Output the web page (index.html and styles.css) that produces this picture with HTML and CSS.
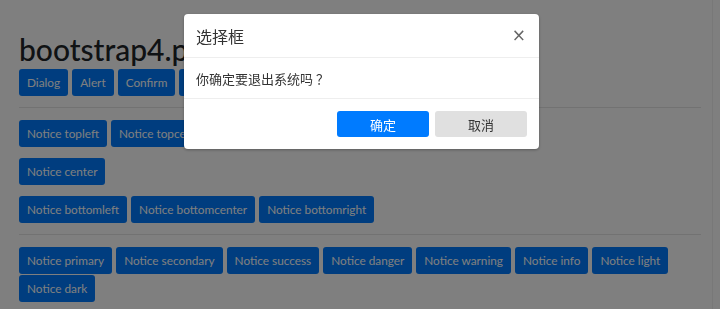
FILE: index.html
```html
<!DOCTYPE html>
<html lang="zh">

<head>
    <meta charset="UTF-8" />
    <meta name="viewport" content="width=device-width, initial-scale=1.0" />
    <title>bootstrap4.pop</title>
    <link rel="stylesheet" href="styles.css">
</head>

<body>

    <!-- Page -->
    <div class="page">
        <h1 class="title">bootstrap4.pop</h1>
        <div class="btn-row">
            <button class="btn">Dialog</button>
            <button class="btn">Alert</button>
            <button class="btn">Confirm</button>
            <button class="btn">Prompt</button>
        </div>

        <hr>

        <div class="btn-row">
            <button class="btn">Notice topleft</button>
            <button class="btn">Notice topcenter</button>
            <button class="btn">Notice topright</button>
        </div>
        <div class="btn-row">
            <button class="btn">Notice center</button>
        </div>
        <div class="btn-row">
            <button class="btn">Notice bottomleft</button>
            <button class="btn">Notice bottomcenter</button>
            <button class="btn">Notice bottomright</button>
        </div>

        <hr>

        <div class="btn-row tight">
            <button class="btn">Notice primary</button>
            <button class="btn">Notice secondary</button>
            <button class="btn">Notice success</button>
            <button class="btn">Notice danger</button>
            <button class="btn">Notice warning</button>
            <button class="btn">Notice info</button>
            <button class="btn">Notice light</button>
            <button class="btn">Notice dark</button>
        </div>
    </div>

    <!-- Confirm modal -->
    <div class="backdrop"></div>
    <div class="modal">
        <div class="modal-header">
            <h5>选择框</h5>
            <button class="close">×</button>
        </div>
        <div class="modal-body">你确定要退出系统吗 ？</div>
        <div class="modal-footer">
            <button class="m-btn ok">确定</button>
            <button class="m-btn cancel">取消</button>
        </div>
    </div>

</body>

</html>
```

FILE: styles.css
```css
* {
    box-sizing: border-box;
    margin: 0;
    padding: 0;
}

body {
    background-color: #fff;
    color: #212529;
    font-family: Lato, 'Noto Sans CJK SC', sans-serif;
}

.page {
    width: 713px;
    height: 309px;
    padding: 0 11px 0 19px;
    border-right: 1px solid #f0f0f0;
}

.title {
    font-size: 30px;
    font-weight: 500;
    line-height: 34px;
    padding-top: 32px;
    margin-bottom: 3px;
}

.btn-row {
    display: flex;
    flex-wrap: wrap;
    gap: 11px 4px;
    margin-bottom: 11px;
}

.btn-row.tight {
    row-gap: 1px;
}

.btn {
    font-family: Lato, sans-serif;
    font-size: 11.8px;
    line-height: 19px;
    padding: 4px 8px;
    color: #fff;
    background: #007bff;
    border: none;
    border-radius: 3px;
}

hr {
    border: none;
    border-top: 1px solid rgba(0, 0, 0, 0.1);
    margin: 0 0 12px;
}

/* Modal */

.backdrop {
    position: fixed;
    top: 0;
    left: 0;
    width: 100vw;
    height: 100vh;
    background-color: rgba(0, 0, 0, 0.5);
}

.modal {
    position: fixed;
    top: 14px;
    left: 184px;
    width: 355px;
    background: #fff;
    border-radius: 4px;
    box-shadow: 0 1px 3px rgba(0, 0, 0, 0.3);
    font-family: 'Noto Sans CJK SC', sans-serif;
    color: #333;
}

.modal-header {
    display: flex;
    align-items: center;
    justify-content: space-between;
    height: 44px;
    padding: 0 12px;
    border-bottom: 1px solid #eee;
}

.modal-header h5 {
    font-size: 16px;
    font-weight: 400;
}

.close {
    background: none;
    border: none;
    font-size: 17px;
    color: #666;
    font-family: 'DejaVu Sans', sans-serif;
    line-height: 1;
    margin-right: 1px;
}

.modal-body {
    height: 41px;
    padding: 0 12px;
    display: flex;
    align-items: center;
    font-size: 13px;
    border-bottom: 1px solid #eee;
}

.modal-footer {
    display: flex;
    justify-content: flex-end;
    gap: 6px;
    padding: 12px 12px 12px;
}

.m-btn {
    width: 92px;
    height: 26px;
    border: none;
    border-radius: 3px;
    font-family: 'Noto Sans CJK SC', sans-serif;
    font-size: 13px;
}

.ok {
    background: #007bff;
    color: #fff;
}

.cancel {
    background: #e0e0e0;
    color: #333;
}
```
